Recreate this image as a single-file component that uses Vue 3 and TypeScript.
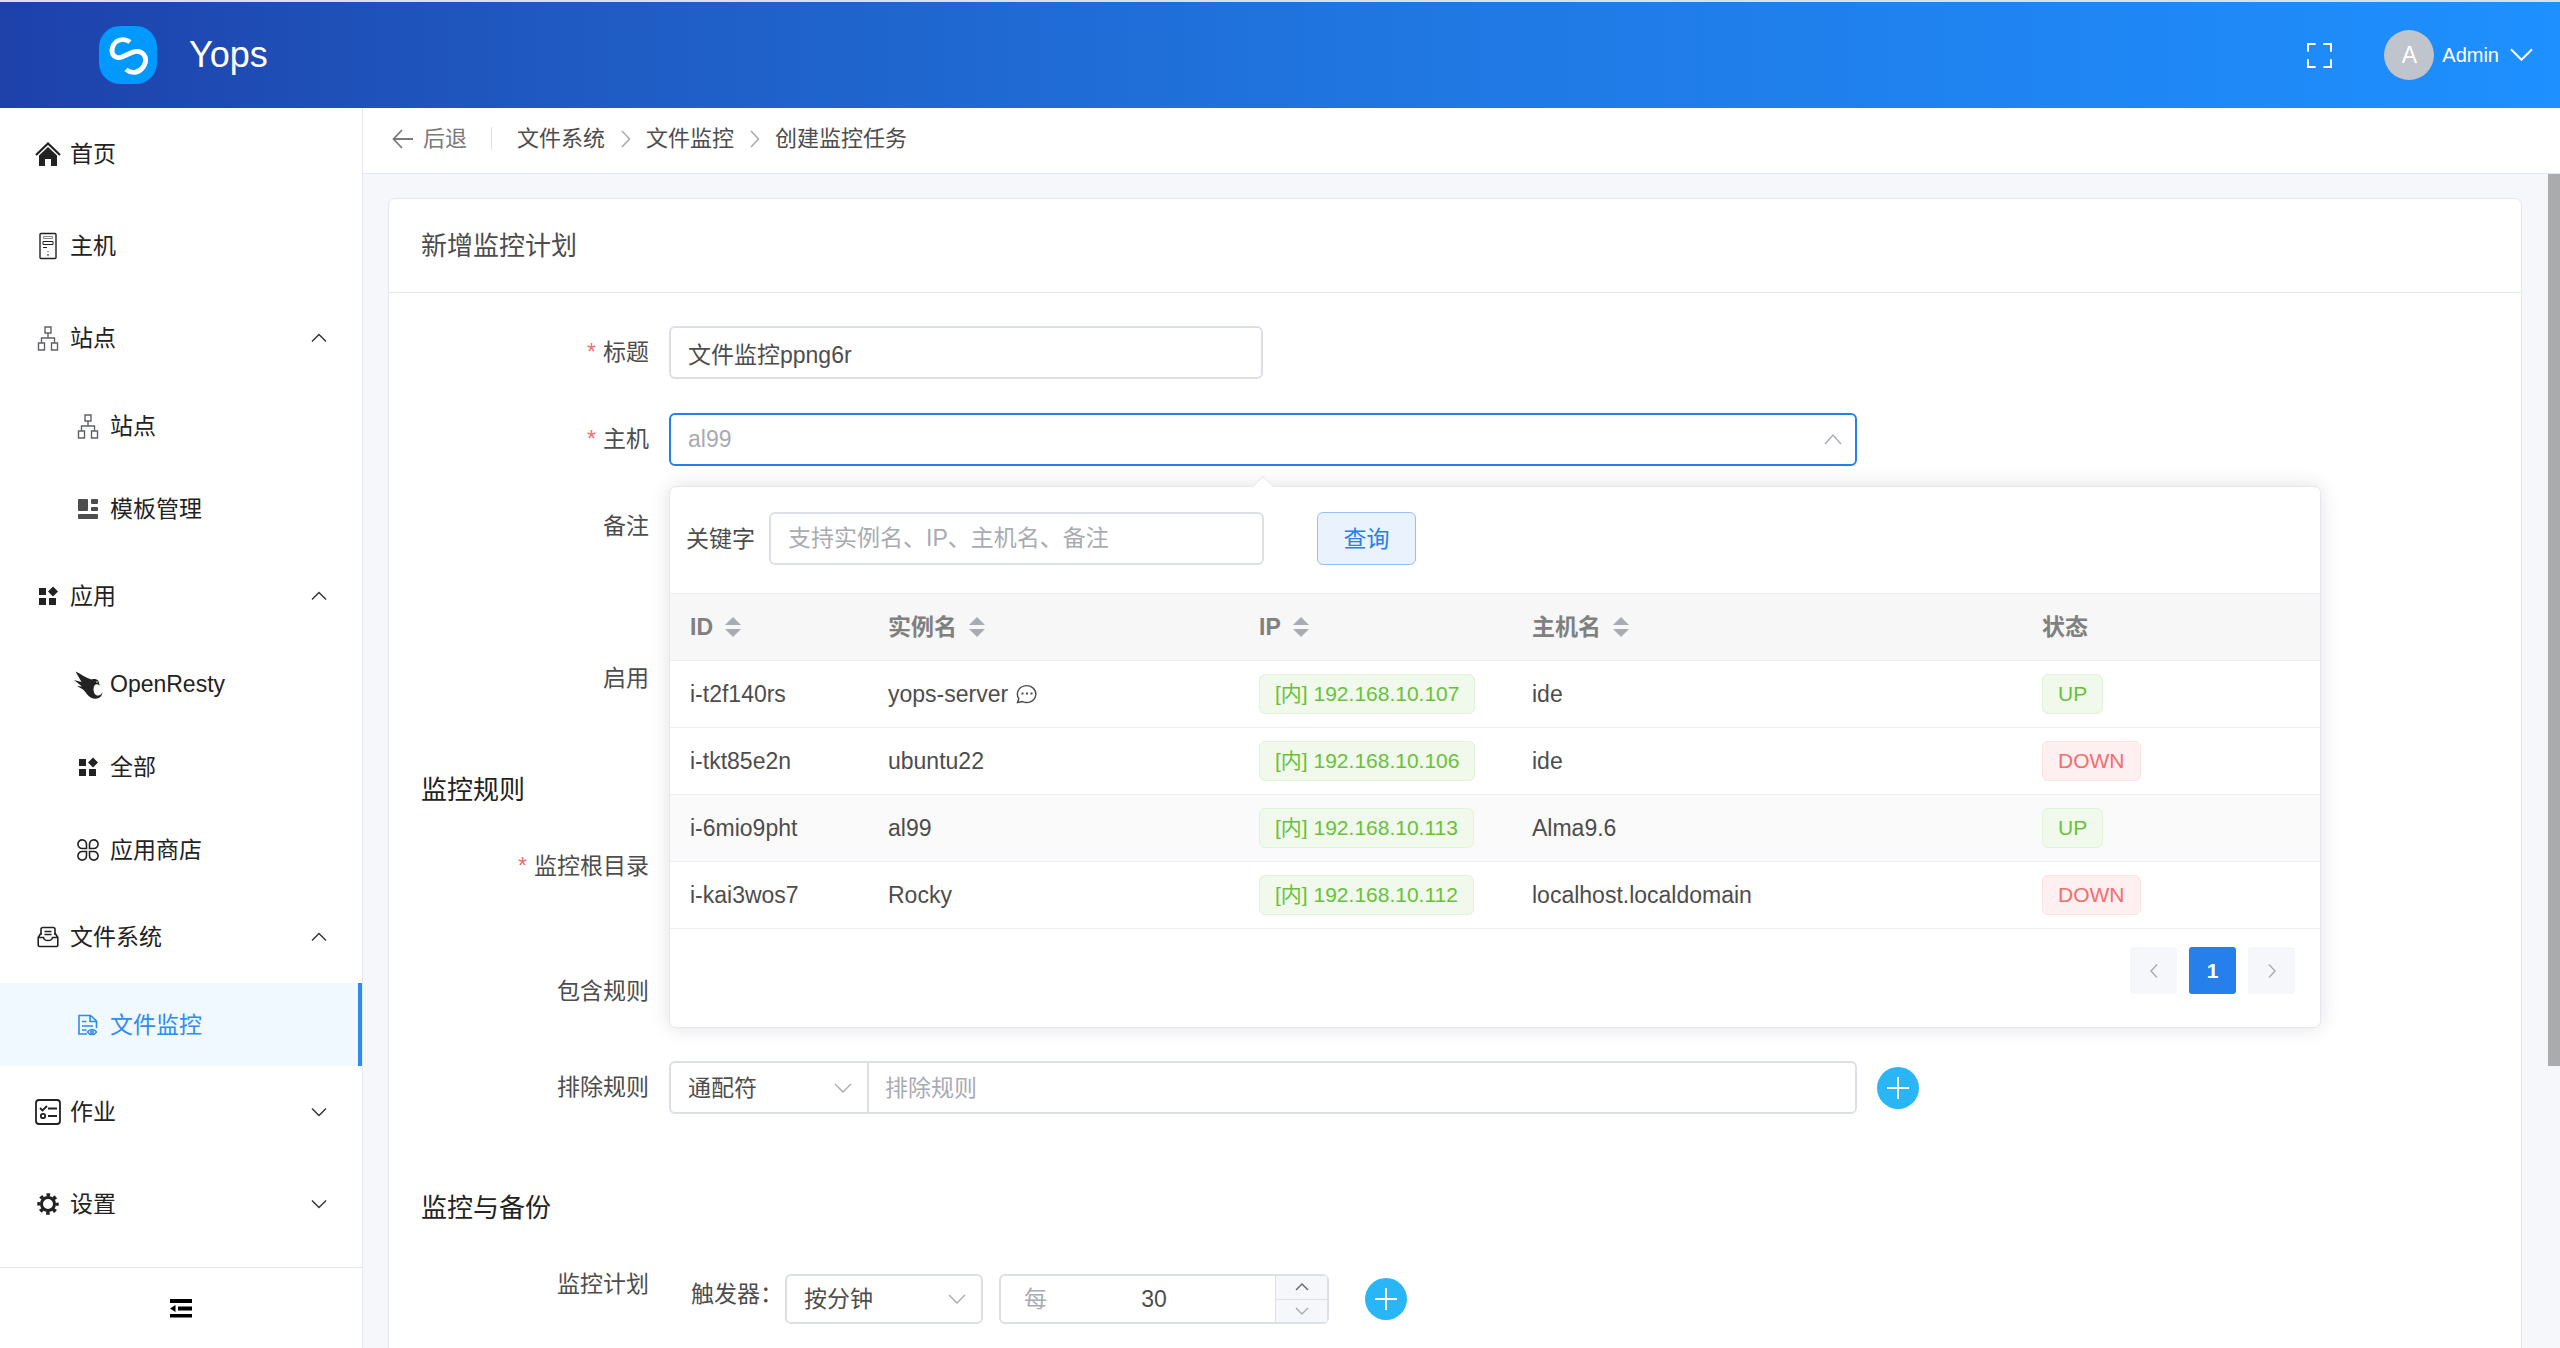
<script setup lang="ts">
import { ref } from 'vue'

interface MenuItem {
  label: string
  icon: string
  sub?: boolean
  active?: boolean
  arrow?: 'up' | 'down'
}

interface Host {
  id: string
  name: string
  note?: boolean
  ip: string
  hostname: string
  up: boolean
}

const menu: MenuItem[] = [
  { label: '首页', icon: 'home' },
  { label: '主机', icon: 'server' },
  { label: '站点', icon: 'site', arrow: 'up' },
  { label: '站点', icon: 'site', sub: true },
  { label: '模板管理', icon: 'template', sub: true },
  { label: '应用', icon: 'apps', arrow: 'up' },
  { label: 'OpenResty', icon: 'bird', sub: true },
  { label: '全部', icon: 'apps', sub: true },
  { label: '应用商店', icon: 'store', sub: true },
  { label: '文件系统', icon: 'files', arrow: 'up' },
  { label: '文件监控', icon: 'watch', sub: true, active: true },
  { label: '作业', icon: 'job', arrow: 'down' },
  { label: '设置', icon: 'gear', arrow: 'down' },
]

const crumbs = ['文件系统', '文件监控', '创建监控任务']

const columns = [
  { label: 'ID', sortable: true },
  { label: '实例名', sortable: true },
  { label: 'IP', sortable: true },
  { label: '主机名', sortable: true },
  { label: '状态', sortable: false },
]

const hosts: Host[] = [
  { id: 'i-t2f140rs', name: 'yops-server', note: true, ip: '192.168.10.107', hostname: 'ide', up: true },
  { id: 'i-tkt85e2n', name: 'ubuntu22', ip: '192.168.10.106', hostname: 'ide', up: false },
  { id: 'i-6mio9pht', name: 'al99', ip: '192.168.10.113', hostname: 'Alma9.6', up: true },
  { id: 'i-kai3wos7', name: 'Rocky', ip: '192.168.10.112', hostname: 'localhost.localdomain', up: false },
]

const selectedHost = ref('i-6mio9pht')
const title = ref('文件监控ppng6r')
const hostName = ref('')
const remark = ref('')
const enabled = ref(true)
const rootDir = ref('')
const includeRule = ref('')
const excludeRule = ref('')
const keyword = ref('')
const matchType = ref('通配符')
const trigger = ref('按分钟')
const every = ref('30')

function step(n: number) {
  every.value = String(Number(every.value) + n)
}
</script>

<template>
  <div class="app">
    <header class="topbar">
      <div class="brand">
        <svg class="logo" viewBox="0 0 58 58" aria-hidden="true">
          <rect width="58" height="58" rx="21" fill="#0099ff" />
          <path
            d="M31 16C26 12 18 13 14.500 19C11.500 25 13 30 18 31.500C20 32 22 31.500 24 30.500L34 26C40 24 45.500 27 46.500 32.500C47.500 38 43 45 36 46.300C33 46.800 30 46 27 43.500"
            fill="none"
            stroke="#fff"
            stroke-width="4.800"
          />
        </svg>
        <span class="brand-name">Yops</span>
      </div>
      <div class="account">
        <button class="plain" type="button" aria-label="全屏">
          <svg class="i-full" viewBox="0 0 26 26" fill="none" stroke="#fff" stroke-width="2">
            <path d="M1 9V1h8M17 1h8v8M25 17v8h-8M9 25H1v-8" />
          </svg>
        </button>
        <button class="plain user" type="button">
          <span class="avatar">A</span>
          <span>Admin</span>
          <svg class="i-user-arrow" viewBox="0 0 24 14" fill="none" stroke="#fff" stroke-width="2">
            <path d="M1 1l11 11L23 1" />
          </svg>
        </button>
      </div>
    </header>

    <div class="body">
      <aside class="sidebar">
        <nav class="menu">
          <a
            v-for="(m, i) in menu"
            :key="i"
            href="#"
            class="item"
            :class="{ sub: m.sub, active: m.active }"
          >
            <span class="icon">
              <svg viewBox="0 0 32 32" fill="none" stroke="currentColor" stroke-width="1.400">
                <template v-if="m.icon === 'home'">
                  <path d="M4 17L16 5.500L28 17" stroke-width="2.200" />
                  <path d="M7 17.500L16 9l9 8.500V28h-6v-7h-6v7H7z" fill="currentColor" stroke="none" />
                </template>
                <template v-else-if="m.icon === 'server'">
                  <rect x="8" y="3.500" width="16" height="25" rx="1" />
                  <path d="M11.500 6.500h9v2h-9z" stroke="#888" stroke-width="1" />
                  <path d="M11 11.500h10v3h-10zM11 17.500h4M16 21v1M16 24v2" stroke-width="1" />
                </template>
                <g v-else-if="m.icon === 'site'" stroke="#606266">
                  <path d="M13 5h6v6h-6zM6.500 21h6v7h-6zM19.500 21h6v7h-6zM16 11v5M9.500 21v-5h13v5" />
                </g>
                <g v-else-if="m.icon === 'template'" fill="#4d4d4d" stroke="none">
                  <rect x="6" y="6" width="10" height="12" rx="1" />
                  <rect x="19" y="6" width="7" height="5" rx="1" />
                  <rect x="19" y="14" width="7" height="4" rx="1" />
                  <rect x="6" y="21" width="20" height="5" rx="1" />
                </g>
                <g v-else-if="m.icon === 'apps'" fill="currentColor" stroke="none">
                  <rect x="7" y="8" width="7" height="7" />
                  <rect x="7" y="18" width="7" height="7" />
                  <rect x="17" y="18" width="7" height="7" />
                  <path d="M21 6.500l5 5-5 5-5-5z" />
                </g>
                <g v-else-if="m.icon === 'bird'" fill="currentColor" stroke="none">
                  <path
                    d="M3.500 3.500C9 6 14 10 19.500 11.500C22 10.500 25 11 26.500 13L27.800 18C26 15.500 23 16 22 18.500C20.800 22 22 26.500 25 27.500C27.800 28 29.500 26.500 30.300 24C30.500 29 26 31.500 21.500 30.500C16 29.500 14.500 24.500 11 21.500L5 18L10 18.500L2 12L9.500 14z"
                  />
                  <circle cx="25" cy="14" r="0.800" fill="#fff" />
                </g>
                <g v-else-if="m.icon === 'store'" stroke-width="1.600">
                  <path
                    d="M14.500 14.500h-4a4.300 4.300 0 1 1 4-4zM17.500 14.500h4a4.300 4.300 0 1 0-4-4zM14.500 17.500h-4a4.300 4.300 0 1 0 4 4zM17.500 17.500h4a4.300 4.300 0 1 1-4 4z"
                  />
                </g>
                <template v-else-if="m.icon === 'files'">
                  <path d="M9 14V8.500a2 2 0 0 1 2-2h10a2 2 0 0 1 2 2V14M12.500 10.500h7M12.500 13.500h7" stroke-width="1.600" />
                  <path
                    d="M9 12l-2.800 4.500V24a1.500 1.500 0 0 0 1.500 1.500h16.600a1.500 1.500 0 0 0 1.500-1.500v-7.500L23 12M6.200 16.500h5.300c.5 4 8.500 4 9 0h5.300"
                    stroke-width="1.600"
                  />
                </template>
                <template v-else-if="m.icon === 'watch'">
                  <path d="M15 25H7V6.500h11.500l6 5.500v7M18 7v5.500h6M10 12.500h4.500M10 17h11M10 21h4.500" stroke-width="1.600" />
                  <path d="M15.500 23c2.200-3.400 6.800-3.400 9 0c-2.200 3.400-6.800 3.400-9 0z" />
                  <circle cx="20" cy="23" r="1.300" />
                </template>
                <template v-else-if="m.icon === 'job'">
                  <rect x="4" y="4" width="24" height="24" rx="3" stroke-width="1.800" />
                  <path d="M8 12l2.500 2.500 4.500-4.500M16 12.500h9M16 20h9" stroke-width="1.800" />
                  <circle cx="11" cy="20" r="2.200" stroke-width="1.800" />
                </template>
                <template v-else>
                  <circle cx="16" cy="16" r="6.500" stroke-width="3" />
                  <circle cx="16" cy="16" r="9" stroke-width="3.400" stroke-dasharray="3.534 3.534" stroke-dashoffset="1.767" />
                </template>
              </svg>
            </span>
            <span class="item-label">{{ m.label }}</span>
            <svg v-if="m.arrow" class="item-arrow" viewBox="0 0 16 10" fill="none" stroke="#303133" stroke-width="1.400">
              <path :d="m.arrow === 'up' ? 'M1 8.500L8 1.500L15 8.500' : 'M1 1.500L8 8.500L15 1.500'" />
            </svg>
          </a>
        </nav>
        <button class="plain collapse" type="button" aria-label="收起菜单">
          <svg viewBox="0 0 24 20" fill="#000">
            <path d="M1 1h22v4H1zM9 8.500h14v4H9zM1 16h22v3.500H1zM1 10.500l5.500-3.500v7z" />
          </svg>
        </button>
      </aside>

      <main class="main">
        <div class="crumbbar">
          <button class="plain back" type="button">
            <svg viewBox="0 0 22 20" fill="none" stroke="currentColor" stroke-width="1.800">
              <path d="M10 1L1.500 10L10 19M1.500 10H21" />
            </svg>
            后退
          </button>
          <span class="crumb-divider"></span>
          <template v-for="(c, i) in crumbs" :key="c">
            <svg v-if="i" class="crumb-sep" viewBox="0 0 10 18" fill="none" stroke="#a8abb2" stroke-width="1.600">
              <path d="M1 1l7.500 8L1 17" />
            </svg>
            <a href="#" class="crumb">{{ c }}</a>
          </template>
        </div>

        <div class="scroll">
          <section class="card">
            <h1 class="card-title">新增监控计划</h1>
            <form class="form" @submit.prevent>
              <div class="row">
                <label class="label required" for="f-title">标题</label>
                <div class="control">
                  <input id="f-title" v-model="title" class="input half" type="text" />
                </div>
              </div>

              <div class="row">
                <label class="label required" for="f-host">主机</label>
                <div class="control">
                  <div class="host-select">
                    <input id="f-host" v-model="hostName" class="input focus" type="text" placeholder="al99" />
                    <svg class="host-arrow" viewBox="0 0 20 12" fill="none" stroke="#a8abb2" stroke-width="1.400">
                      <path d="M2 11L10 2L18 11" />
                    </svg>

                    <div class="popover">
                      <span class="tip"></span>
                      <div class="search">
                        <label for="f-key">关键字</label>
                        <input
                          id="f-key"
                          v-model="keyword"
                          class="input key"
                          type="text"
                          placeholder="支持实例名、IP、主机名、备注"
                        />
                        <button class="query" type="button">查询</button>
                      </div>
                      <table class="table">
                        <colgroup>
                          <col class="c-id" />
                          <col class="c-name" />
                          <col class="c-ip" />
                          <col class="c-host" />
                          <col />
                        </colgroup>
                        <thead>
                          <tr>
                            <th v-for="c in columns" :key="c.label" scope="col">
                              <span class="th">
                                {{ c.label }}
                                <svg v-if="c.sortable" viewBox="0 0 16 20" fill="#a8abb2">
                                  <path d="M8 0l8 8H0zM8 20l8-8H0z" />
                                </svg>
                              </span>
                            </th>
                          </tr>
                        </thead>
                        <tbody>
                          <tr v-for="h in hosts" :key="h.id" :class="{ current: h.id === selectedHost }" @click="selectedHost = h.id">
                            <td>{{ h.id }}</td>
                            <td>
                              <span class="name">
                                {{ h.name }}
                                <svg v-if="h.note" viewBox="0 0 22 20" fill="none" stroke="#4d4d4d" stroke-width="1.400">
                                  <path d="M1.500 18.500L2.800 14.500A9.200 8.400 0 1 1 6.500 17.600z" />
                                  <path d="M5.500 9.500h2M10 9.500h2M14.500 9.500h2" stroke-width="2" />
                                </svg>
                              </span>
                            </td>
                            <td><span class="tag ok">[内] {{ h.ip }}</span></td>
                            <td>{{ h.hostname }}</td>
                            <td><span class="tag" :class="h.up ? 'ok' : 'bad'">{{ h.up ? 'UP' : 'DOWN' }}</span></td>
                          </tr>
                        </tbody>
                      </table>
                      <div class="pager">
                        <button type="button" aria-label="上一页" disabled>
                          <svg viewBox="0 0 10 16" fill="none" stroke="#a8abb2" stroke-width="1.400"><path d="M8 1.500L2 8l6 6.500" /></svg>
                        </button>
                        <button type="button" class="on">1</button>
                        <button type="button" aria-label="下一页" disabled>
                          <svg viewBox="0 0 10 16" fill="none" stroke="#a8abb2" stroke-width="1.400"><path d="M2 1.500L8 8l-6 6.500" /></svg>
                        </button>
                      </div>
                    </div>
                  </div>
                </div>
              </div>

              <div class="row">
                <label class="label" for="f-remark">备注</label>
                <div class="control">
                  <textarea id="f-remark" v-model="remark" class="input area"></textarea>
                </div>
              </div>

              <div class="row">
                <label class="label" for="f-enabled">启用</label>
                <div class="control">
                  <input id="f-enabled" v-model="enabled" type="checkbox" />
                </div>
              </div>

              <h2 class="section">监控规则</h2>

              <div class="row root">
                <label class="label required" for="f-root">监控根目录</label>
                <div class="control">
                  <input id="f-root" v-model="rootDir" class="input wide" type="text" />
                </div>
              </div>

              <div class="row include">
                <label class="label" for="f-include">包含规则</label>
                <div class="control">
                  <input id="f-include" v-model="includeRule" class="input wide" type="text" />
                </div>
              </div>

              <div class="row exclude">
                <label class="label" for="f-exclude">排除规则</label>
                <div class="control">
                  <div class="group">
                    <div class="select">
                      <select v-model="matchType" aria-label="匹配方式">
                        <option>通配符</option>
                      </select>
                      <svg viewBox="0 0 18 10" fill="none" stroke="#a8abb2" stroke-width="1.400"><path d="M1 1l8 8 8-8" /></svg>
                    </div>
                    <input id="f-exclude" v-model="excludeRule" class="group-input" type="text" placeholder="排除规则" />
                  </div>
                  <button class="add" type="button" aria-label="添加规则">
                    <svg viewBox="0 0 22 22" stroke="#fff" stroke-width="2"><path d="M11 0v22M0 11h22" /></svg>
                  </button>
                </div>
              </div>

              <h2 class="section">监控与备份</h2>

              <div class="row plan">
                <span class="label">监控计划</span>
                <div class="control">
                  <label class="trigger-label" for="f-trigger">触发器：</label>
                  <div class="select boxed">
                    <select id="f-trigger" v-model="trigger">
                      <option>按分钟</option>
                    </select>
                    <svg viewBox="0 0 18 10" fill="none" stroke="#a8abb2" stroke-width="1.400"><path d="M1 1l8 8 8-8" /></svg>
                  </div>
                  <div class="number">
                    <label for="f-every">每</label>
                    <input id="f-every" v-model="every" type="text" inputmode="numeric" />
                    <div class="steps">
                      <button type="button" aria-label="增加" @click="step(1)">
                        <svg viewBox="0 0 14 8" fill="none" stroke="#606266" stroke-width="1.400"><path d="M1 7l6-6 6 6" /></svg>
                      </button>
                      <button type="button" aria-label="减少" @click="step(-1)">
                        <svg viewBox="0 0 14 8" fill="none" stroke="#a8abb2" stroke-width="1.400"><path d="M1 1l6 6 6-6" /></svg>
                      </button>
                    </div>
                  </div>
                  <button class="add" type="button" aria-label="添加触发器">
                    <svg viewBox="0 0 22 22" stroke="#fff" stroke-width="2"><path d="M11 0v22M0 11h22" /></svg>
                  </button>
                </div>
              </div>
            </form>
          </section>
          <span class="thumb"></span>
        </div>
      </main>
    </div>
  </div>
</template>

<style>
body {
  margin: 0;
  overflow: hidden;
}
</style>

<style scoped>
.app {
  --blue: #2680eb;
  --text: #4d4d4d;
  --line: #e4e7ed;
  --border: #dcdfe6;
  display: flex;
  flex-direction: column;
  height: 100vh;
  font-family: 'Liberation Sans', 'Noto Sans CJK SC', sans-serif;
  font-size: 23px;
  line-height: 34px;
  color: var(--text);
  background: #fff;
}
.app *,
.app *::before {
  box-sizing: border-box;
}
button,
input,
select,
textarea {
  font: inherit;
  color: inherit;
  margin: 0;
}
button {
  cursor: pointer;
}
a {
  color: inherit;
  text-decoration: none;
}
.plain {
  border: 0;
  padding: 0;
  background: none;
}
svg {
  display: block;
  flex: none;
}

/* top bar */
.topbar {
  flex: none;
  display: flex;
  align-items: center;
  justify-content: space-between;
  height: 108px;
  padding: 0 27px 0 99px;
  border-top: 2px solid #dcdfe3;
  background: linear-gradient(90deg, #1e41aa, #1f5dc5 25%, #2077e2 55%, #1e90ff);
  color: #fff;
}
.brand {
  display: flex;
  align-items: center;
  gap: 32px;
}
.logo {
  width: 58px;
  height: 58px;
}
.brand-name {
  font-size: 36px;
  line-height: 48px;
}
.account {
  display: flex;
  align-items: center;
  gap: 52px;
}
.i-full {
  width: 25px;
  height: 25px;
}
.user {
  display: flex;
  align-items: center;
  gap: 8px;
  font-size: 20px;
}
.avatar {
  width: 50px;
  height: 50px;
  border-radius: 50%;
  background: #c0c4cc;
  font-size: 23px;
  line-height: 50px;
}
.i-user-arrow {
  width: 23px;
  height: 14px;
  margin-left: 3px;
}

/* sidebar */
.body {
  flex: 1;
  display: flex;
  min-height: 0;
}
.sidebar {
  flex: none;
  display: flex;
  flex-direction: column;
  width: 363px;
  border-right: 1px solid var(--line);
  color: #222;
}
.menu {
  flex: 1;
  min-height: 0;
  overflow: hidden;
}
.item {
  display: flex;
  align-items: center;
  height: 92px;
  padding: 0 35px 0 28px;
}
.item.sub {
  height: 83px;
  padding-left: 68px;
}
.item.active {
  background: #f0f9ff;
  border-right: 4px solid #2d8cf0;
  color: #2d8cf0;
}
.icon {
  display: flex;
  justify-content: center;
  width: 40px;
  margin-right: 2px;
}
.icon svg {
  width: 32px;
  height: 32px;
}
.item-label {
  flex: 1;
}
.item-arrow {
  width: 16px;
  height: 10px;
}
.collapse {
  flex: none;
  display: flex;
  align-items: center;
  justify-content: center;
  height: 81px;
  border-top: 1px solid var(--line);
}
.collapse svg {
  width: 24px;
  height: 20px;
}

/* breadcrumb */
.main {
  flex: 1;
  display: flex;
  flex-direction: column;
  min-width: 0;
}
.crumbbar {
  flex: none;
  display: flex;
  align-items: center;
  height: 66px;
  padding: 0 29px 4px;
  border-bottom: 1px solid var(--line);
  font-size: 22px;
}
.back {
  display: flex;
  align-items: center;
  gap: 9px;
  color: #7a7a7a;
}
.back svg {
  width: 22px;
  height: 20px;
}
.crumb-divider {
  width: 1px;
  height: 23px;
  margin: 0 25px 0 24px;
  background: var(--border);
}
.crumb-sep {
  width: 10px;
  height: 18px;
  margin: 0 15px 0 16px;
}

/* card */
.scroll {
  flex: 1;
  position: relative;
  min-height: 0;
  padding: 24px 38px 0 25px;
  overflow: hidden;
  background: #f5f7fb;
}
.thumb {
  position: absolute;
  top: 0;
  right: 0;
  width: 12px;
  height: 76%;
  background: #a9abac;
}
.card {
  border: 1px solid var(--line);
  border-radius: 7px;
  background: #fff;
}
.card-title {
  margin: 0;
  padding: 30px 32px 29px;
  border-bottom: 1px solid var(--line);
  font-size: 26px;
  font-weight: 400;
  line-height: 34px;
}
.form {
  padding: 33px 70px 33px 32px;
}
.row {
  display: flex;
  margin-bottom: 34px;
}
.label {
  flex: none;
  width: 248px;
  padding-right: 20px;
  line-height: 53px;
  text-align: right;
}
.required::before {
  content: '*';
  margin-right: 7px;
  color: #f56c6c;
}
.control {
  flex: 1;
  display: flex;
  align-items: center;
  min-width: 0;
  min-height: 53px;
}
.input {
  height: 53px;
  padding: 0 17px;
  border: 2px solid var(--border);
  border-radius: 6px;
  outline: 0;
  background: #fff;
}
::placeholder {
  color: #a8abb2;
  opacity: 1;
}
.half {
  width: 33.333%;
}
.wide {
  width: 66.667%;
}
.area {
  display: block;
  width: 66.667%;
  height: 118px;
  resize: none;
}
.root {
  margin-bottom: 72px;
}
.include {
  margin-bottom: 43px;
}
.exclude {
  margin-bottom: 77px;
}
.section {
  margin: 68px 0 33px;
  font-size: 26px;
  font-weight: 400;
  line-height: 34px;
  color: #222;
}

/* host picker */
.host-select {
  position: relative;
  width: 66.667%;
}
.focus {
  display: block;
  width: 100%;
  border-color: var(--blue);
}
.host-arrow {
  position: absolute;
  top: 20px;
  right: 14px;
  width: 20px;
  height: 12px;
}
.popover {
  position: absolute;
  z-index: 2;
  top: 73px;
  left: 0;
  width: 1652px;
  padding-bottom: 33px;
  border: 1px solid var(--line);
  border-radius: 7px;
  background: #fff;
  box-shadow: 0 0 20px rgba(0, 0, 0, 0.12);
}
.tip {
  position: absolute;
  top: -8px;
  left: 585px;
  width: 16px;
  height: 16px;
  border: 1px solid var(--line);
  border-right: 0;
  border-bottom: 0;
  background: #fff;
  transform: rotate(45deg);
}
.search {
  display: flex;
  align-items: center;
  padding: 25px 16px 28px;
}
.key {
  width: 495px;
  margin: 0 53px 0 14px;
}
.query {
  width: 99px;
  height: 53px;
  padding: 0;
  border: 1px solid #93c0f5;
  border-radius: 6px;
  background: #e9f2fd;
  color: var(--blue);
}
.table {
  width: 100%;
  border-collapse: collapse;
  table-layout: fixed;
  border-top: 1px solid #ebeef5;
}
.c-id {
  width: 198px;
}
.c-name {
  width: 371px;
}
.c-ip {
  width: 273px;
}
.c-host {
  width: 510px;
}
th,
td {
  height: 67px;
  padding: 0 20px;
  border-bottom: 1px solid #ebeef5;
  text-align: left;
}
th {
  background: #f7f7f7;
  color: #808080;
}
.th,
.name {
  display: flex;
  align-items: center;
  gap: 12px;
}
.th svg {
  width: 16px;
  height: 20px;
}
.name {
  gap: 8px;
}
.name svg {
  width: 22px;
  height: 20px;
}
.current td {
  background: #fafafa;
}
.tag {
  display: inline-block;
  padding: 0 15px;
  border: 1px solid;
  border-radius: 6px;
  font-size: 21px;
  line-height: 38px;
  vertical-align: middle;
}
.ok {
  border-color: #e1f3d8;
  background: #f0f9eb;
  color: #67c23a;
}
.bad {
  border-color: #fde2e2;
  background: #fef0f0;
  color: #f56c6c;
}
.pager {
  display: flex;
  justify-content: flex-end;
  gap: 12px;
  padding: 18px 25px 0;
}
.pager button {
  display: flex;
  align-items: center;
  justify-content: center;
  width: 47px;
  height: 47px;
  padding: 0;
  border: 0;
  border-radius: 3px;
  background: #f5f7fa;
}
.pager .on {
  background: var(--blue);
  color: #fff;
  font-size: 21px;
  font-weight: 700;
}
.pager svg {
  width: 10px;
  height: 16px;
}

/* rule and plan rows */
.group {
  display: flex;
  width: 66.667%;
  height: 53px;
  border: 2px solid var(--border);
  border-radius: 6px;
}
.select {
  position: relative;
  flex: none;
  width: 196px;
}
.select select {
  width: 100%;
  height: 100%;
  padding: 0 17px;
  border: 0;
  outline: 0;
  appearance: none;
  background: transparent;
}
.select svg {
  position: absolute;
  top: 50%;
  right: 15px;
  width: 18px;
  height: 10px;
  margin-top: -5px;
}
.group-input {
  flex: 1;
  min-width: 0;
  padding: 0 16px;
  border: 0;
  border-left: 2px solid var(--border);
  border-radius: 0 6px 6px 0;
  outline: 0;
  background: none;
}
.add {
  flex: none;
  display: flex;
  align-items: center;
  justify-content: center;
  width: 42px;
  height: 42px;
  margin-left: 20px;
  padding: 0;
  border: 0;
  border-radius: 50%;
  background: #29b6f6;
}
.add svg {
  width: 22px;
  height: 22px;
}
.plan {
  margin-bottom: 0;
}
.plan .control {
  padding-top: 16px;
}
.trigger-label {
  width: 116px;
  padding: 0 0 10px 22px;
  white-space: nowrap;
}
.boxed {
  width: 198px;
  height: 50px;
  border: 2px solid var(--border);
  border-radius: 6px;
}
.number {
  display: flex;
  align-items: center;
  width: 330px;
  height: 50px;
  margin-left: 16px;
  border: 2px solid var(--border);
  border-radius: 6px;
}
.number label {
  padding-left: 23px;
  color: #a8abb2;
}
.number input {
  flex: 1;
  min-width: 0;
  padding: 0 14px 0 0;
  border: 0;
  outline: 0;
  background: none;
  text-align: center;
}
.steps {
  display: flex;
  flex-direction: column;
  width: 52px;
  height: 100%;
  border-left: 1px solid var(--border);
}
.steps button {
  flex: 1;
  display: flex;
  align-items: center;
  justify-content: center;
  padding: 0;
  border: 0;
  background: #f5f7fa;
}
.steps button + button {
  border-top: 1px solid var(--border);
}
.steps svg {
  width: 14px;
  height: 8px;
}
.number + .add {
  margin-left: 36px;
}
</style>
